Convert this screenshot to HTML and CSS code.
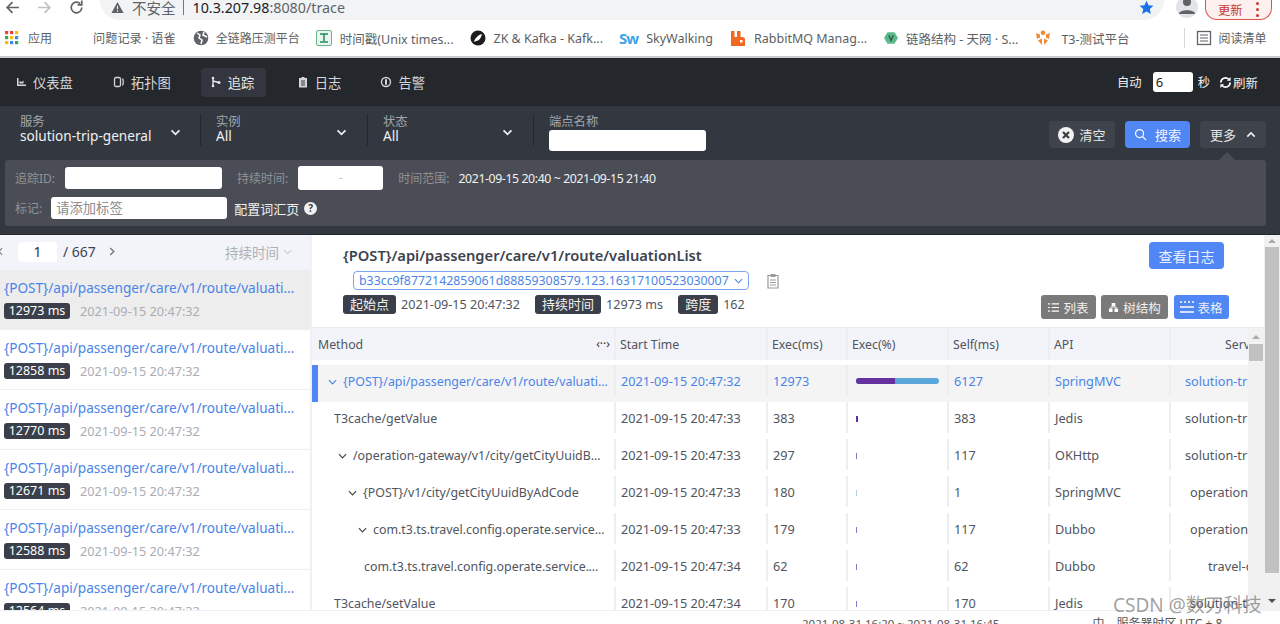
FILE: index.html
```html
<!DOCTYPE html>
<html lang="zh">
<head>
<meta charset="utf-8">
<title>trace</title>
<link rel="stylesheet" href="styles.css">
</head>
<body>
<div class="page">
  <header class="browser-top">
    <div class="nav-btns">
      <svg class="bicon" viewBox="0 0 16 16"><path d="M14 8H3M8 3L3 8l5 5" fill="none" stroke="#5f6368" stroke-width="1.6"/></svg>
      <svg class="bicon" viewBox="0 0 16 16"><path d="M2 8h11M8 3l5 5-5 5" fill="none" stroke="#bdc1c6" stroke-width="1.6"/></svg>
      <svg class="bicon" viewBox="0 0 16 16"><path d="M13 8a5 5 0 1 1-1.5-3.6M13 1.500v4h-4" fill="none" stroke="#5f6368" stroke-width="1.6"/></svg>
    </div>
    <div class="omnibox">
      <svg class="warn" viewBox="0 0 14 14"><path d="M7 1l6.500 12H.5z" fill="#5f6368"/><path d="M7 5v4M7 10v1.500" stroke="#f1f3f4" stroke-width="1.2"/></svg>
      <span class="insecure">不安全</span>
      <span class="omni-sep"></span>
      <span class="url">10.3.207.98<span class="url-dim">:8080/trace</span></span>
      <svg class="star" viewBox="0 0 16 16"><path d="M8 .8l2.200 4.800 5.200.6-3.900 3.500 1.100 5.200L8 12.300l-4.600 2.600 1.100-5.200L.6 6.200l5.200-.6z" fill="#1a73e8"/></svg>
    </div>
    <div class="avatar"><svg viewBox="0 0 22 22"><circle cx="11" cy="6" r="4" fill="#5f6368"/><path d="M3 18c0-5 16-5 16 0z" fill="#5f6368"/></svg></div>
    <div class="update"><span>更新</span><span class="update-dots"><i></i><i></i><i></i></span></div>
  </header>

  <nav class="bookmarks">
    <svg class="bm-apps" viewBox="0 0 14 14">
      <rect x="0" y="0" width="3.200" height="3.200" fill="#ea4335"/><rect x="5" y="0" width="3.200" height="3.200" fill="#ea4335"/><rect x="10" y="0" width="3.200" height="3.200" fill="#fbbc04"/>
      <rect x="0" y="5" width="3.200" height="3.200" fill="#34a853"/><rect x="5" y="5" width="3.200" height="3.200" fill="#fbbc04"/><rect x="10" y="5" width="3.200" height="3.200" fill="#4285f4"/>
      <rect x="0" y="10" width="3.200" height="3.200" fill="#fbbc04"/><rect x="5" y="10" width="3.200" height="3.200" fill="#4285f4"/><rect x="10" y="10" width="3.200" height="3.200" fill="#34a853"/>
    </svg>
    <span class="bm bm-cn">应用</span>
    <span class="bm bm-b">问题记录 · 语雀</span>
    <svg class="bm-ic bm-c" viewBox="0 0 16 16"><circle cx="8" cy="8" r="7.300" fill="#5f6368"/><path d="M4 3l3 2-1 3 3 2-1 4M11 2l-1 3 4 2" fill="none" stroke="#fff" stroke-width="1.500"/></svg>
    <span class="bm bm-cn">全链路压测平台</span>
    <svg class="bm-ic bm-d" viewBox="0 0 16 16"><rect x=".5" y=".5" width="15" height="15" rx="1.500" fill="#eaf6ef" stroke="#6bb38a"/><path d="M4 4h8M8 4v7M4 12h8" fill="none" stroke="#1f8a56" stroke-width="1.500"/></svg>
    <span class="bm">时间戳(Unix times...</span>
    <svg class="bm-ic bm-e" viewBox="0 0 16 16"><circle cx="8" cy="8" r="7.500" fill="#1c1c1c"/><path d="M4 12c1-4 4-7 8-8-1 4-3 7-6 7" fill="#fff"/></svg>
    <span class="bm">ZK &amp; Kafka - Kafk...</span>
    <span class="sw">Sw</span>
    <span class="bm">SkyWalking</span>
    <svg class="bm-ic bm-f" viewBox="0 0 16 16"><path d="M1 16V1h3.500v6H7V1h3.500v6H12c2 0 3 1 3 2.500V16z" fill="#f26822"/><rect x="10" y="10" width="2.500" height="2.500" fill="#fff"/></svg>
    <span class="bm">RabbitMQ Manag...</span>
    <svg class="bm-ic bm-g" viewBox="0 0 16 16"><path d="M4 1.500h8L16 8l-4 6.500H4L0 8z" fill="#5bb98c"/><path d="M5.500 5L8 11l2.500-6" fill="none" stroke="#2d5d46" stroke-width="1.500"/></svg>
    <span class="bm">链路结构 - 天网 · S...</span>
    <svg class="bm-ic bm-h" viewBox="0 0 16 16"><circle cx="8" cy="2.800" r="2.300" fill="#f08a34"/><path d="M1 3l4 1.500v3L2 9zM15 3l-4 1.500v3L14 9zM3 10.500l4-2V15zM13 10.500l-4-2V15z" fill="#f08a34"/></svg>
    <span class="bm">T3-测试平台</span>
    <span class="bm-sep"></span>
    <svg class="bm-ic bm-i" viewBox="0 0 16 16"><rect x="1.500" y="1.500" width="13" height="13" fill="none" stroke="#5f6368" stroke-width="1.300"/><path d="M4 5h8M4 8h8M4 11h8" stroke="#5f6368" stroke-width="1.200"/></svg>
    <span class="bm bm-cn">阅读清单</span>
  </nav>

  <section class="topbar">
    <a class="tab tab-1">
      <svg class="tab-ic" viewBox="0 0 12 12"><path d="M2 2v8h9V8.500H3.500V2zM4.500 7.500V5l2 1 2-1.500v3z" fill="#d5d6d9"/></svg>仪表盘</a>
    <a class="tab tab-2">
      <svg class="tab-ic" viewBox="0 0 12 12"><rect x="1.500" y="1.500" width="6" height="9" rx="1.500" fill="none" stroke="#d5d6d9" stroke-width="1.300"/><path d="M9.500 2.500c1 1 1 6 0 7" fill="none" stroke="#d5d6d9" stroke-width="1.300"/></svg>拓扑图</a>
    <a class="tab tab-active">
      <svg class="tab-ic" viewBox="0 0 12 12"><path d="M3 1v10M3 5l6 1.500" fill="none" stroke="#e6e7e9" stroke-width="1.400"/><circle cx="3" cy="2" r="1.300" fill="#e6e7e9"/><circle cx="9" cy="6.500" r="1.500" fill="#e6e7e9"/><circle cx="3" cy="10" r="1.300" fill="#e6e7e9"/></svg>追踪</a>
    <a class="tab tab-4">
      <svg class="tab-ic" viewBox="0 0 12 12"><path d="M2 2h2.500V1h3v1H10v9.500H2z" fill="#d5d6d9"/><path d="M4 5h4M4 7h4M4 9h4" stroke="#24272c" stroke-width=".9"/></svg>日志</a>
    <a class="tab tab-5">
      <svg class="tab-ic" viewBox="0 0 12 12"><circle cx="6" cy="6" r="4.500" fill="none" stroke="#d5d6d9" stroke-width="1.400"/><rect x="5" y="3" width="2" height="6" rx="1" fill="#d5d6d9"/></svg>告警</a>
    <div class="auto">
      <span>自动</span>
      <input class="auto-input" value="6" aria-label="秒">
      <span>秒</span>
      <svg class="refresh" viewBox="0 0 14 14"><path d="M2 7a5 5 0 0 1 8.500-3.500M12 7a5 5 0 0 1-8.500 3.500" fill="none" stroke="#fff" stroke-width="1.800"/><path d="M12.500 1v4h-4zM1.500 13V9h4z" fill="#fff"/></svg>
      <span class="refresh-text">刷新</span>
    </div>
  </section>

  <section class="filters">
    <div class="filter-row">
      <div class="sel sel-1"><div class="sel-body"><span class="sel-label">服务</span><span class="sel-value">solution-trip-general</span></div><svg class="chev" viewBox="0 0 12 8"><path d="M1.500 1.500L6 6l4.500-4.500" fill="none" stroke="#eee" stroke-width="2"/></svg></div>
      <div class="sel sel-2"><div class="sel-body"><span class="sel-label">实例</span><span class="sel-value">All</span></div><svg class="chev" viewBox="0 0 12 8"><path d="M1.500 1.500L6 6l4.500-4.500" fill="none" stroke="#eee" stroke-width="2"/></svg></div>
      <div class="sel sel-3"><div class="sel-body"><span class="sel-label">状态</span><span class="sel-value">All</span></div><svg class="chev" viewBox="0 0 12 8"><path d="M1.500 1.500L6 6l4.500-4.500" fill="none" stroke="#eee" stroke-width="2"/></svg></div>
      <div class="endpoint"><span class="sel-label">端点名称</span><input class="ep-input" aria-label="端点名称"></div>
      <div class="actions">
        <button class="btn"><svg class="btn-clear" viewBox="0 0 16 16"><circle cx="8" cy="8" r="8" fill="#f1f1f1"/><path d="M5 5l6 6M11 5l-6 6" stroke="#3a3d44" stroke-width="2.200"/></svg>清空</button>
        <button class="btn btn-primary"><svg class="btn-search" viewBox="0 0 14 14"><circle cx="6" cy="6" r="4.300" fill="none" stroke="#fff" stroke-width="1.300"/><path d="M9.200 9.200L13 13" stroke="#fff" stroke-width="1.300"/></svg>搜索</button>
        <button class="btn btn-more">更多<svg class="btn-up" viewBox="0 0 12 8"><path d="M1.500 6.500L6 2l4.500 4.500" fill="none" stroke="#eee" stroke-width="2"/></svg></button>
      </div>
    </div>
    <div class="more-panel">
      <span class="panel-caret"></span>
      <div class="panel-row panel-row-1">
        <span class="p-label">追踪ID:</span><input class="p-input p-id" aria-label="追踪ID">
        <span class="p-label p-dur">持续时间:</span><div class="p-input p-range">-</div>
        <span class="p-label p-time">时间范围:</span><span class="p-value">2021-09-15 20:40 ~ 2021-09-15 21:40</span>
      </div>
      <div class="panel-row panel-row-2">
        <span class="p-label">标记:</span><div class="p-input p-tag">请添加标签</div>
        <span class="p-link">配置词汇页</span><span class="p-help">?</span>
      </div>
    </div>
  </section>

  <main class="content">
    <aside class="side">
      <div class="pager">
        <svg class="pg-l" viewBox="0 0 6 10"><path d="M5 1L1 5l4 4" fill="none" stroke="#888" stroke-width="1.500"/></svg>
        <span class="pg-box">1</span><span class="pg-total">/ 667</span>
        <svg class="pg-r" viewBox="0 0 6 10"><path d="M1 1l4 4-4 4" fill="none" stroke="#777" stroke-width="1.500"/></svg>
        <span class="pg-sort">持续时间<svg class="pg-chev" viewBox="0 0 10 6"><path d="M1 1l4 4 4-4" fill="none" stroke="#aaa" stroke-width="1"/></svg></span>
      </div>
      <div class="trace trace-on"><div class="trace-title">{POST}/api/passenger/care/v1/route/valuationList</div><div class="trace-meta"><span class="ms">12973 ms</span><span class="tm">2021-09-15 20:47:32</span></div></div>
      <div class="trace"><div class="trace-title">{POST}/api/passenger/care/v1/route/valuationList</div><div class="trace-meta"><span class="ms">12858 ms</span><span class="tm">2021-09-15 20:47:32</span></div></div>
      <div class="trace"><div class="trace-title">{POST}/api/passenger/care/v1/route/valuationList</div><div class="trace-meta"><span class="ms">12770 ms</span><span class="tm">2021-09-15 20:47:32</span></div></div>
      <div class="trace"><div class="trace-title">{POST}/api/passenger/care/v1/route/valuationList</div><div class="trace-meta"><span class="ms">12671 ms</span><span class="tm">2021-09-15 20:47:32</span></div></div>
      <div class="trace"><div class="trace-title">{POST}/api/passenger/care/v1/route/valuationList</div><div class="trace-meta"><span class="ms">12588 ms</span><span class="tm">2021-09-15 20:47:32</span></div></div>
      <div class="trace"><div class="trace-title">{POST}/api/passenger/care/v1/route/valuationList</div><div class="trace-meta"><span class="ms">12564 ms</span><span class="tm">2021-09-15 20:47:32</span></div></div>
    </aside>

    <section class="detail">
      <div class="detail-head">
        <div class="head-left">
          <h1 class="d-title">{POST}/api/passenger/care/v1/route/valuationList</h1>
          <div class="id-row">
            <div class="id-select"><span>b33cc9f8772142859061d88859308579.123.16317100523030007</span><svg class="id-chev" viewBox="0 0 10 6"><path d="M1 1l4 4 4-4" fill="none" stroke="#4b84e8" stroke-width="1.200"/></svg></div>
            <svg class="copy" viewBox="0 0 12 16"><path d="M1 2.500h10V15H1z" fill="#fff" stroke="#999" stroke-width="1.200"/><rect x="3.500" y="1" width="5" height="3" fill="#999"/><path d="M3 7h6M3 9.500h6M3 12h6" stroke="#999"/></svg>
          </div>
          <div class="stats">
            <span class="chip">起始点</span><span class="stat">2021-09-15 20:47:32</span>
            <span class="chip">持续时间</span><span class="stat">12973 ms</span>
            <span class="chip">跨度</span><span class="stat">162</span>
          </div>
        </div>
        <div class="head-right">
          <button class="log-btn">查看日志</button>
          <div class="views">
            <button class="vbtn"><svg class="v-ic" viewBox="0 0 12 12"><path d="M0 2h2M4 2h8M0 6h2M4 6h8M0 10h2M4 10h8" stroke="#fff" stroke-width="1.300"/></svg>列表</button>
            <button class="vbtn vbtn-tree"><svg class="v-ic" viewBox="0 0 12 12"><path d="M4 1h4v3.500H4zM1 7h4v4H1zM7 7h4v4H7z" fill="#fff"/><path d="M3 7V5.500h6V7" fill="none" stroke="#fff"/></svg>树结构</button>
            <button class="vbtn vbtn-on"><svg class="v-ic v-ic-l" viewBox="0 0 14 12"><path d="M0 1h14" stroke="#fff" stroke-width="1.500" stroke-dasharray="2 2"/><path d="M0 6h14M0 11h14" stroke="#fff" stroke-width="1.500"/></svg>表格</button>
          </div>
        </div>
      </div>

      <div class="table-wrap">
        <div class="table">
          <div class="row head">
            <div class="c c1">Method<span class="resize">‹··›</span></div><div class="c c2">Start Time</div><div class="c c3">Exec(ms)</div><div class="c c4">Exec(%)</div><div class="c c5">Self(ms)</div><div class="c c6">API</div><div class="c c7 c-r">Service</div>
          </div>
          <div class="spacer"></div>
          <div class="row row-on">
            <div class="c c1 l-on"><svg class="tw" viewBox="0 0 10 6"><path d="M1 1l4 4 4-4" fill="none" stroke="#4b84e8" stroke-width="1.300"/></svg><span class="t">{POST}/api/passenger/care/v1/route/valuationList</span></div><div class="c c2">2021-09-15 20:47:32</div><div class="c c3">12973</div><div class="c c4"><span class="bar"><span class="bar-in"></span></span></div><div class="c c5">6127</div><div class="c c6">SpringMVC</div><div class="c c7">solution-trip-general</div>
          </div>
          <div class="row">
            <div class="c c1 l0"><span class="t">T3cache/getValue</span></div><div class="c c2">2021-09-15 20:47:33</div><div class="c c3">383</div><div class="c c4"><span class="tick tick-a"></span></div><div class="c c5">383</div><div class="c c6">Jedis</div><div class="c c7">solution-trip-general</div>
          </div>
          <div class="row">
            <div class="c c1 l1"><svg class="tw" viewBox="0 0 10 6"><path d="M1 1l4 4 4-4" fill="none" stroke="#444" stroke-width="1.300"/></svg><span class="t">/operation-gateway/v1/city/getCityUuidByAdCode</span></div><div class="c c2">2021-09-15 20:47:33</div><div class="c c3">297</div><div class="c c4"><span class="tick tick-b"></span></div><div class="c c5">117</div><div class="c c6">OKHttp</div><div class="c c7">solution-trip-general</div>
          </div>
          <div class="row">
            <div class="c c1 l2"><svg class="tw" viewBox="0 0 10 6"><path d="M1 1l4 4 4-4" fill="none" stroke="#444" stroke-width="1.300"/></svg><span class="t">{POST}/v1/city/getCityUuidByAdCode</span></div><div class="c c2">2021-09-15 20:47:33</div><div class="c c3">180</div><div class="c c4"><span class="tick tick-c"></span></div><div class="c c5">1</div><div class="c c6">SpringMVC</div><div class="c c7 c-op">operation-gateway</div>
          </div>
          <div class="row">
            <div class="c c1 l3"><svg class="tw" viewBox="0 0 10 6"><path d="M1 1l4 4 4-4" fill="none" stroke="#444" stroke-width="1.300"/></svg><span class="t">com.t3.ts.travel.config.operate.service.CityService</span></div><div class="c c2">2021-09-15 20:47:33</div><div class="c c3">179</div><div class="c c4"><span class="tick tick-b"></span></div><div class="c c5">117</div><div class="c c6">Dubbo</div><div class="c c7 c-op">operation-gateway</div>
          </div>
          <div class="row">
            <div class="c c1 l4"><span class="t">com.t3.ts.travel.config.operate.service.CityService</span></div><div class="c c2">2021-09-15 20:47:34</div><div class="c c3">62</div><div class="c c4"><span class="tick tick-b"></span></div><div class="c c5">62</div><div class="c c6">Dubbo</div><div class="c c7 c-tr">travel-config</div>
          </div>
          <div class="row">
            <div class="c c1 l0"><span class="t">T3cache/setValue</span></div><div class="c c2">2021-09-15 20:47:34</div><div class="c c3">170</div><div class="c c4"><span class="tick tick-b"></span></div><div class="c c5">170</div><div class="c c6">Jedis</div><div class="c c7 c-op">solution-trip</div>
          </div>
        </div>
        <div class="sb-in"><span class="sb-up"></span><span class="sb-thumb"></span></div>
      </div>
      <div class="sb-out"><span class="sb-up"></span><span class="sb-out-thumb"></span><span class="sb-down"></span></div>
    </section>
  </main>
  <footer class="foot">
    <span class="foot-time">2021-08-31 16:20 ~ 2021-08-31 16:45</span>
    <span class="foot-zone">中　服务器时区 UTC + 8</span>
  </footer>
  <div class="watermark">CSDN @数刃科技</div>
</div>
</body>
</html>
```

FILE: styles.css
```css
* { box-sizing: border-box; }
html, body { margin: 0; padding: 0; }
body { font-family: "Noto Sans", "Noto Sans CJK SC", sans-serif; font-size: 13px; color: #3d444f; background: #fff; }
.page { position: relative; width: 1280px; height: 624px; overflow: hidden; display: flex; flex-direction: column; }
button { font-family: inherit; border: 0; cursor: pointer; }
input { border: 0; outline: 0; font-family: inherit; }

/* browser chrome */
.browser-top { height: 20px; display: flex; align-items: center; background: #fff; flex: none; }
.nav-btns { display: flex; width: 100px; padding-left: 4px; gap: 15px; flex: none; margin-top: -6px; }
.bicon { width: 17px; height: 17px; flex: none; }
.omnibox { width: 1064px; height: 40px; margin-top: -20px; padding: 14px 0 0 11px; background: #f1f3f4; border-radius: 20px; display: flex; align-items: center; color: #202124; flex: none; }
.warn { width: 13px; height: 13px; }
.insecure { margin-left: 8px; font-size: 14.500px; color: #5f6368; }
.omni-sep { width: 1px; height: 15px; background: #777; margin: 0 9px 0 7px; }
.url { font-size: 14.300px; color: #202124; }
.url-dim { color: #5f6368; }
.star { width: 15px; height: 15px; margin-left: auto; margin-right: 10px; }
.avatar { width: 22px; height: 22px; margin: -6px 0 0 12px; border-radius: 50%; background: #e2e4e7; flex: none; overflow: hidden; }
.avatar svg { display: block; width: 22px; height: 22px; }
.update { width: 67px; height: 20px; margin: 0 0 0 7px; padding: 0 12px; border: 1px solid #d9534a; border-top: 0; border-radius: 0 0 12px 12px; background: #fdf0ef; color: #c5392f; font-size: 12.300px; display: flex; align-items: center; justify-content: space-between; flex: none; }
.update-dots { display: flex; flex-direction: column; gap: 3px; }
.update-dots i { width: 3px; height: 3px; background: #c5392f; border-radius: 50%; display: block; }

.bookmarks { height: 38px; display: flex; align-items: center; padding: 0 0 0 5px; background: #fff; border-bottom: 2px solid #c8cacd; flex: none; font-size: 12.500px; color: #5c5f63; }
.bm { white-space: nowrap; }
.bm-cn { font-size: 12px; }
.bm-apps { width: 14px; height: 14px; flex: none; margin-right: 9px; }
.bm-b { margin-left: 41px; font-size: 12.200px; }
.bm-ic { width: 16px; height: 16px; flex: none; margin-right: 8px; }
.bm-c { margin-left: 17px; margin-right: 7px; }
.bm-d { margin-left: 16px; }
.bm-e { margin-left: 17px; margin-right: 7px; }
.bm-f { margin-left: 17px; }
.bm-g { margin-left: 17px; width: 14px; }
.bm-h { margin-left: 17px; margin-right: 10px; }
.bm-i { margin-left: 11px; margin-right: 7px; }
.sw { font-size: 15px; font-weight: 700; color: #3fa2e8; margin: 0 8px 0 16px; letter-spacing: -1px; }
.bm-sep { width: 1px; height: 20px; background: #d5d7da; margin-left: 54px; }

/* top nav */
.topbar { height: 48px; background: #24272c; color: #d5d6d9; display: flex; align-items: center; padding: 0 22px 0 12px; flex: none; font-size: 13.300px; }
.tab { display: flex; align-items: center; height: 29px; padding: 0 3px; gap: 6px; white-space: nowrap; }
.tab-ic { width: 12px; height: 12px; flex: none; }
.tab-2 { margin-left: 34px; }
.tab-active { background: #33363e; border-radius: 4px; padding: 0 0 0 9px; width: 65px; color: #e6e7e9; margin-left: 27px; }
.tab-4 { margin-left: 28px; }
.tab-5 { margin-left: 33px; }
.auto { margin-left: auto; display: flex; align-items: center; color: #f1f1f1; font-size: 12.300px; }
.auto-input { width: 40px; height: 20px; margin: 0 5px 0 11px; padding: 0 3px; background: #fff; border-radius: 3px; color: #222; font-size: 13px; }
.refresh { width: 13px; height: 13px; margin: 0 0 0 9px; }
.refresh-text { font-size: 12.500px; margin-left: 1px; }

/* filters */
.filters { height: 129px; background: #333840; padding: 1px 14px 0 5px; flex: none; position: relative; border-bottom: 1px solid #24272c; }
.filter-row { display: flex; height: 53px; padding-top: 7px; align-items: flex-start; }
.sel { position: relative; display: flex; height: 32px; padding-left: 15px; color: #f1f1f1; }
.sel + .sel, .endpoint { border-left: 1px solid #24272c; }
.sel-1 { width: 195px; }
.sel-2 { width: 167px; }
.sel-3 { width: 166px; }
.sel-body { display: flex; flex-direction: column; line-height: 17px; }
.sel-label { font-size: 12.300px; color: #a3a6ab; line-height: 16px; }
.sel-value { font-size: 13.600px; line-height: 18px; margin-top: -3px; white-space: nowrap; }
.chev { position: absolute; right: 20px; top: 15px; width: 11px; height: 7px; }
.sel-1 .chev { right: 19px; }
.endpoint { height: 32px; padding-left: 15px; display: flex; flex-direction: column; }
.ep-input { width: 157px; height: 21px; margin-top: 0; background: #fff; border-radius: 3px; flex: none; }
.actions { margin-left: auto; display: flex; gap: 10px; padding-top: 7px; }
.btn { height: 27px; padding: 0; width: 66px; border-radius: 4px; background: #3f434b; color: #e7e7e8; font-size: 13px; display: flex; align-items: center; justify-content: center; gap: 5px; }
.btn-primary { width: 65px; background: #5087f5; gap: 8px; color: #f1f5ff; }
.btn-clear { width: 16px; height: 16px; }
.btn-search { width: 13px; height: 13px; }
.btn-up { width: 10px; height: 7px; margin-left: 5px; }
.more-panel { position: relative; height: 66px; background: #4a4d55; border-radius: 3px; padding: 6px 0 0 10px; color: #d8d9db; }
.panel-caret { position: absolute; right: 31px; top: -8px; border: 8px solid transparent; border-top: 0; border-bottom-color: #4a4d55; }
.panel-row { display: flex; align-items: center; }
.panel-row-1 { height: 24px; }
.panel-row-2 { height: 22px; margin-top: 7px; }
.p-label { font-size: 12px; color: #8f9297; white-space: nowrap; }
.p-input { background: #fff; border-radius: 3px; height: 22px; flex: none; }
.p-id { width: 157px; margin-left: 10px; }
.p-dur { margin-left: 15px; }
.p-range { width: 85px; height: 24px; margin-left: 10px; color: #c5c5c5; font-size: 12px; text-align: center; line-height: 24px; }
.p-time { margin-left: 15px; }
.p-value { margin-left: 9px; font-size: 12.300px; color: #f1f1f1; white-space: nowrap; letter-spacing: -.4px; }
.p-tag { width: 176px; height: 22px; margin-left: 9px; padding-left: 5px; color: #8d8d8d; font-size: 13.300px; line-height: 22px; }
.p-link { margin-left: 7px; font-size: 13px; color: #f1f1f1; }
.p-help { width: 13px; height: 13px; margin-left: 5px; border-radius: 50%; background: #f1f1f1; color: #3a3d44; font-size: 10px; font-weight: 700; text-align: center; line-height: 13px; }

/* content */
.content { flex: 1; display: flex; min-height: 0; background: #fff; }
.side { width: 312px; flex: none; border-right: 2px solid #f0f1f4; overflow: hidden; }
.pager { height: 35px; background: #f3f4f9; display: flex; align-items: center; position: relative; padding-left: 18px; padding-bottom: 2px; font-size: 14px; }
.pg-l { position: absolute; left: -2px; top: 12px; width: 5px; height: 9px; }
.pg-box { width: 39px; height: 20px; background: #fff; border-radius: 3px; text-align: center; line-height: 20px; color: #333; }
.pg-total { margin-left: 6px; }
.pg-r { width: 6px; height: 9px; margin-left: 13px; }
.pg-sort { margin-left: auto; margin-right: 18px; font-size: 13.500px; color: #aeb0b5; display: flex; align-items: center; gap: 4px; }
.pg-chev { width: 9px; height: 6px; }
.trace { height: 60px; padding: 8px 8px 0 4px; border-bottom: 1px solid #eeeff2; }
.trace-on { background: #ededed; }
.trace-title { font-size: 13.600px; line-height: 20px; color: #4b84e8; white-space: nowrap; overflow: hidden; text-overflow: ellipsis; }
.trace-meta { display: flex; align-items: center; margin-top: 4px; }
.ms { height: 16px; line-height: 16px; padding: 0 3px; background: #3a3f49; border-radius: 3px; color: #fff; font-size: 12.500px; width: 66px; text-align: center; white-space: nowrap; }
.tm { margin-left: 10px; color: #aaadb3; font-size: 12.700px; white-space: nowrap; }

.detail { flex: 1; min-width: 0; position: relative; padding-right: 16px; display: flex; flex-direction: column; }
.detail-head { height: 92px; display: flex; justify-content: space-between; flex: none; padding-left: 31px; }
.d-title { margin: 9px 0 0; font-size: 14.700px; line-height: 22px; font-weight: 600; color: #3d444f; }
.id-row { display: flex; align-items: center; margin-top: 5px; margin-left: 10px; }
.id-select { width: 396px; height: 19px; padding: 0 5px; border: 1px solid #7aa3f0; border-radius: 4px; display: flex; align-items: center; justify-content: space-between; color: #4b84e8; font-size: 12.350px; white-space: nowrap; }
.id-chev { width: 9px; height: 6px; flex: none; }
.copy { width: 12px; height: 16px; margin-left: 18px; }
.stats { display: flex; align-items: center; margin-top: 5px; font-size: 12.600px; }
.chip { height: 19px; line-height: 19px; padding: 0 7px; background: #3a3f49; color: #f1f1f1; border-radius: 3px; font-size: 13px; }
.stat { margin: 0 15px 0 5px; color: #50555e; white-space: nowrap; }
.head-right { display: flex; flex-direction: column; align-items: flex-end; width: 220px; }
.log-btn { margin: 7px 40px 0 0; width: 75px; height: 27px; background: #5087f5; border-radius: 4px; color: #e8efff; font-size: 14px; padding: 0; }
.views { display: flex; gap: 5px; margin-top: 26px; margin-right: 35px; }
.vbtn { height: 24px; width: 55px; padding: 0; border-radius: 3px; background: #7a7a7a; color: #f1f1f1; font-size: 12.500px; display: flex; align-items: center; justify-content: center; gap: 4px; }
.vbtn-tree { width: 67px; }
.vbtn-on { background: #5087f5; width: 55px; gap: 3px; margin-left: 1px; }
.v-ic { width: 11px; height: 11px; }
.v-ic-l { width: 14px; height: 12px; }

.table-wrap { flex: 1; min-height: 0; display: flex; border-top: 1px solid #eaebee; }
.table { width: 936px; overflow: hidden; flex: none; }
.row { display: flex; height: 37px; font-size: 12.700px; color: #50555e; white-space: nowrap; }
.head { height: 32px; background: #f3f4f9; font-size: 12.300px; }
.spacer { height: 5px; }
.c { display: flex; align-items: center; flex: none; height: 31px; border-left: 2px solid #eceef1; padding-left: 5px; overflow: hidden; margin: 0 0 6px; }
.head .c { margin: 0; height: 32px; padding-left: 4px; padding-top: 0; }
.c1 { width: 302px; border-left: 0; position: relative; padding-right: 8px; padding-top: 2px; font-size: 12.400px; }
.head .c1 { padding-left: 6px; font-size: 12.300px; }
.c2 { width: 152px; }
.c3 { width: 80px; }
.c4 { width: 101px; }
.c5 { width: 101px; }
.c6 { width: 121px; }
.c7 { width: 79px; padding-left: 14px; }
.head .c-r { padding-left: 54px; }
.c-op { padding-left: 19px; }
.c-tr { padding-left: 37px; }
.resize { position: absolute; right: 4px; top: 8px; font-size: 12px; line-height: 16px; color: #333; }
.row-on { background: #f4f4f4; color: #4b84e8; box-shadow: inset 6px 0 0 #5087f5; }
.c1.l-on { padding-left: 16px; padding-right: 5px; }
.tw { width: 9px; height: 6px; flex: none; margin-right: 6px; }
.t { overflow: hidden; text-overflow: ellipsis; display: block; min-width: 0; }
.l0 { padding-left: 22px; }
.l1 { padding-left: 26px; }
.l2 { padding-left: 36px; }
.l3 { padding-left: 46px; }
.l4 { padding-left: 52px; }
.bar { display: block; width: 83px; height: 6px; margin-left: 3px; border-radius: 3px; background: #5aa7dc; overflow: hidden; }
.bar-in { display: block; width: 39px; height: 6px; background: #65319e; }
.tick { display: block; margin-left: 3px; margin-top: 2px; height: 6px; }
.tick-a { width: 2px; background: #65319e; }
.tick-b { width: 1px; background: #8e74c8; }
.tick-c { width: 1px; background: #a9cfea; }
.sb-in { width: 16px; flex: none; background: #f1f1f1; position: relative; }
.sb-up { display: block; width: 0; margin: 4px auto 0; border: 4px solid transparent; border-top: 0; border-bottom: 4px solid #aaa; }
.sb-in .sb-up { margin-top: 7px; }
.sb-thumb { display: block; height: 17px; width: 14px; margin: 5px auto 0; background: #c1c1c1; }
.sb-out { position: absolute; right: 0; top: 0; bottom: 0; width: 16px; background: #f1f1f1; }
.sb-out-thumb { display: block; margin: 4px auto 0; width: 14px; height: 326px; background: #c1c1c1; }
.sb-down { position: absolute; bottom: 7px; left: 4px; border: 4px solid transparent; border-bottom: 0; border-top: 4px solid #505050; }

.foot { height: 14px; flex: none; position: relative; background: #fff; border-top: 1px solid #eeeff2; color: #555; overflow: hidden; display: flex; }
.foot-time { margin-left: 802px; margin-top: 5px; font-size: 11.500px; line-height: 16px; white-space: nowrap; }
.foot-zone { margin-left: 93px; margin-top: 5px; font-size: 12px; line-height: 16px; white-space: nowrap; }
.watermark { position: absolute; left: 1113px; top: 593px; font-size: 19px; line-height: 24px; color: rgba(120,120,120,.7); white-space: nowrap; }
```
